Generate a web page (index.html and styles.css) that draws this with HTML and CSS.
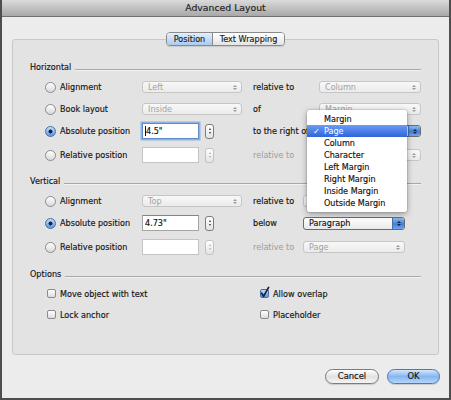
FILE: index.html
```html
<!DOCTYPE html>
<html>
<head>
<meta charset="utf-8">
<title>Advanced Layout</title>
<link rel="stylesheet" href="styles.css">
</head>
<body>
<div class="window">
  <div class="titlebar">Advanced Layout</div>
  <div class="content">
    <div class="tabs"><span class="tab active">Position</span><span class="tab">Text Wrapping</span></div>
    <div class="group">
      <div class="header"><span>Horizontal</span><i class="rule"></i></div>
      <div class="row">
        <span class="radio"></span><span class="label">Alignment</span>
        <div class="ctl"><span class="popup dis">Left<i class="arr"></i></span></div>
        <span class="rlabel">relative to</span>
        <span class="popup dis wide">Column<i class="arr"></i></span>
      </div>
      <div class="row">
        <span class="radio"></span><span class="label">Book layout</span>
        <div class="ctl"><span class="popup dis">Inside<i class="arr"></i></span></div>
        <span class="rlabel">of</span>
        <span class="popup dis wide">Margin<i class="arr"></i></span>
      </div>
      <div class="row">
        <span class="radio on"></span><span class="label">Absolute position</span>
        <div class="ctl"><span class="field focus"><i class="caret"></i>4.5"</span><span class="stepper"></span></div>
        <span class="rlabel">to the right of</span>
        <span class="popup on wide"><b class="ptxt"></b><i class="arr"></i></span>
      </div>
      <div class="row low">
        <span class="radio"></span><span class="label">Relative position</span>
        <div class="ctl"><span class="field off"></span><span class="stepper off"></span></div>
        <span class="rlabel dim">relative to</span>
        <span class="popup dis wide"><b class="ptxt"></b><i class="arr"></i></span>
      </div>

      <div class="header vsec"><span>Vertical</span><i class="rule"></i></div>
      <div class="row">
        <span class="radio"></span><span class="label">Alignment</span>
        <div class="ctl"><span class="popup dis">Top<i class="arr"></i></span></div>
        <span class="rlabel v">relative to</span>
        <span class="popup dis wide"><b class="ptxt"></b><i class="arr"></i></span>
      </div>
      <div class="row">
        <span class="radio on"></span><span class="label">Absolute position</span>
        <div class="ctl"><span class="field">4.73"</span><span class="stepper"></span></div>
        <span class="rlabel v">below</span>
        <span class="popup on wide tall">Paragraph<i class="arr"></i></span>
      </div>
      <div class="row low">
        <span class="radio"></span><span class="label">Relative position</span>
        <div class="ctl"><span class="field off"></span><span class="stepper off"></span></div>
        <span class="rlabel v dim">relative to</span>
        <span class="popup dis wide">Page<i class="arr"></i></span>
      </div>

      <div class="header osec"><span>Options</span><i class="rule"></i></div>
      <div class="orow">
        <span class="opt"><span class="cb"></span>Move object with text</span>
        <span class="opt"><span class="cb on"><svg viewBox="0 0 9 9" width="9" height="9"><path d="M1.6 4.2 L3.6 7.4 L8.6 -1.6" fill="none" stroke="#1b2233" stroke-width="1.7" stroke-linecap="round" stroke-linejoin="round"/></svg></span>Allow overlap</span>
      </div>
      <div class="orow">
        <span class="opt"><span class="cb"></span>Lock anchor</span>
        <span class="opt"><span class="cb"></span>Placeholder</span>
      </div>
    </div>
    <div class="buttons">
      <span class="btn">Cancel</span>
      <span class="btn ok">OK</span>
    </div>
  </div>

  <div class="menu">
    <div class="mi"><span class="ck"></span>Margin</div>
    <div class="mi sel"><span class="ck">✓</span>Page</div>
    <div class="mi"><span class="ck"></span>Column</div>
    <div class="mi"><span class="ck"></span>Character</div>
    <div class="mi"><span class="ck"></span>Left Margin</div>
    <div class="mi"><span class="ck"></span>Right Margin</div>
    <div class="mi"><span class="ck"></span>Inside Margin</div>
    <div class="mi"><span class="ck"></span>Outside Margin</div>
  </div>
</div>
</body>
</html>
```
FILE: styles.css
```css
* { box-sizing: border-box; }
html, body { margin: 0; padding: 0; }
body {
  width: 451px; height: 400px; overflow: hidden;
  font-family: "DejaVu Sans", sans-serif;
  font-size: 8.1px;
  color: #141414;
  -webkit-text-stroke: 0.15px;
  background: #444;
}
.window {
  position: relative;
  width: 451px; height: 400px;
  background: #ececec;
  border: 2px solid #4e4e4e;
  border-top: 0;
  display: flex; flex-direction: column;
}
.titlebar {
  height: 17px;
  line-height: 16px;
  text-align: center;
  font-size: 9.3px;
  color: #1e1e1e;
  background: linear-gradient(#dadada, #a8a8a8);
  border-bottom: 1px solid #707070;
}
.content { display: flex; flex-direction: column; flex: 1; }
.tabs {
  position: relative; z-index: 1;
  align-self: center;
  margin-top: 15px;
  margin-bottom: -7px;
  display: flex;
  height: 14px;
  border: 1px solid #8a8a8a;
  border-radius: 4px;
  overflow: hidden;
  box-shadow: 0 1px 1px rgba(0,0,0,.12);
}
.tab {
  line-height: 12px;
  text-align: center;
  background: linear-gradient(#ffffff, #e4e4e4);
  color: #1a1a1a;
}
.tab:first-child { width: 45px; }
.tab + .tab { width: 72px; border-left: 1px solid #8a8a8a; }
.tab.active { background: linear-gradient(#e3effc, #a9cbf0); }

.group {
  margin-left: 10px;
  width: 427px;
  height: 316px;
  background: #e3e3e3;
  border: 1px solid #c8c8c8;
  border-radius: 3px;
  padding: 21px 17px 0 17px;
}
.header {
  display: flex; align-items: center;
  height: 12px;
  margin-bottom: 3px;
}
.header .rule {
  flex: 1;
  height: 1px;
  margin: 4px 0 0 4px;
  background: #a8a8a8;
  box-shadow: 0 1px 0 #f2f2f2;
}
.vsec { margin-top: 9px; }
.osec { margin-top: 10px; }

.row { display: flex; align-items: center; height: 22px; }
.row.low { margin-top: 2px; }

.radio {
  flex: none;
  width: 11px; height: 11px;
  margin-left: 15px;
  border-radius: 50%;
  border: 1px solid #8b8b8b;
  background: linear-gradient(#ffffff, #d9d9d9);
}
.radio.on {
  border-color: #4a6ea6;
  background: radial-gradient(circle, #17223d 0 1.7px, transparent 2.3px), linear-gradient(#c4dcf7, #5b97e3);
}
.label { width: 82px; margin-left: 4px; }
.ctl { width: 111px; display: flex; align-items: center; }
.rlabel { width: 66px; }
.rlabel.v { width: 50px; }
.dim { color: #9c9c9c; -webkit-text-stroke: 0; }

.popup {
  display: flex; align-items: center; justify-content: space-between;
  width: 100px; height: 12px;
  padding: 0 4px 0 5px;
  border: 1px solid #c6c6c6;
  border-radius: 3px;
  background: linear-gradient(#f8f8f8, #ebebeb);
  color: #a2a2a2;
  -webkit-text-stroke: 0;
  white-space: nowrap;
}
.popup.wide { width: 102px; }
.popup.tall { height: 13px; }
.arr { display: flex; flex-direction: column; gap: 1px; }
.arr::before, .arr::after {
  content: "";
  border-left: 2px solid transparent;
  border-right: 2px solid transparent;
}
.arr::before { border-bottom: 2px solid #9a9a9a; }
.arr::after { border-top: 2px solid #9a9a9a; }

.popup.on {
  padding-right: 0;
  border-color: #6c6c6c;
  background: linear-gradient(#ffffff, #e9e9e9);
  color: #111;
  -webkit-text-stroke: 0.15px;
  overflow: hidden;
}
.popup.on .arr {
  align-self: stretch;
  width: 12px;
  align-items: center; justify-content: center;
  background: linear-gradient(#8cbcf4, #3f7fe0 55%, #6aa6f0);
  border-left: 1px solid #4d6ea3;
}
.popup.on .arr::before { border-bottom-color: #15203a; }
.popup.on .arr::after { border-top-color: #15203a; }

.field {
  display: flex; align-items: center;
  width: 57px; height: 16px;
  padding-left: 2px;
  background: #fff;
  border: 1px solid #a4a4a4;
  border-top-color: #858585;
  color: #111;
}
.field.focus {
  border-color: #5f8cc8;
  box-shadow: 0 0 0 1.5px #8fb4e4;
}
.field.off { border-color: #c4c4c4; }
.caret { width: 1px; height: 10px; background: #111; }

.stepper {
  flex: none;
  width: 9px; height: 15px;
  margin-left: 6px;
  border: 1px solid #7d7d7d;
  border-radius: 3px;
  background: linear-gradient(#ffffff, #e3e3e3);
  display: flex; flex-direction: column; align-items: center; justify-content: center;
  gap: 2px;
}
.stepper::before, .stepper::after {
  content: "";
  border-left: 1.5px solid transparent;
  border-right: 1.5px solid transparent;
}
.stepper::before { border-bottom: 2px solid #333; }
.stepper::after { border-top: 2px solid #333; }
.stepper.off { border-color: #c2c2c2; }
.stepper.off::before { border-bottom-color: #b0b0b0; }
.stepper.off::after { border-top-color: #b0b0b0; }

.orow {
  display: grid;
  grid-template-columns: 213px auto;
  align-items: center;
  height: 21px;
  padding-left: 17px;
}
.opt { display: flex; align-items: center; gap: 4px; }
.cb {
  flex: none;
  width: 9px; height: 9px;
  border: 1px solid #8b8b8b;
  border-radius: 2px;
  background: linear-gradient(#ffffff, #dcdcdc);
  display: flex;
}
.cb.on {
  border-color: #4a6ea6;
  background: linear-gradient(#c4dcf7, #5b97e3);
}
.cb svg { overflow: visible; margin: -1px 0 0 -1px; }

.buttons {
  display: flex; justify-content: flex-end; gap: 8px;
  margin-top: 14px;
  padding-right: 9px;
}
.btn {
  height: 15px;
  line-height: 13px;
  text-align: center;
  border: 1px solid #7c7c7c;
  border-radius: 8px;
  background: linear-gradient(#ffffff, #e2e2e2 50%, #f3f3f3);
  color: #111;
  font-size: 8.4px;
  width: 54px;
  box-shadow: 0 1px 1px rgba(0,0,0,.15);
}
.btn.ok {
  width: 53px;
  border-color: #5476ad;
  background: linear-gradient(#d3e6fc, #86b6f0 50%, #b3d6fb);
}

.menu {
  position: absolute;
  left: 305px; top: 110px;
  width: 100px; height: 102px;
  padding-top: 2.5px;
  background: rgba(255,255,255,0.98);
  border-radius: 3px;
  box-shadow: 0 2px 6px rgba(0,0,0,.35), 0 0 0 1px rgba(0,0,0,.08);
  z-index: 5;
}
.mi {
  display: flex; align-items: center;
  height: 12.1px;
  padding-left: 6px;
  color: #111;
  white-space: nowrap;
}
.mi .ck { width: 11px; }
.mi.sel {
  background: linear-gradient(#6c9cf3, #2f64dc);
  color: #fff;
  -webkit-text-stroke: 0;
}
```
